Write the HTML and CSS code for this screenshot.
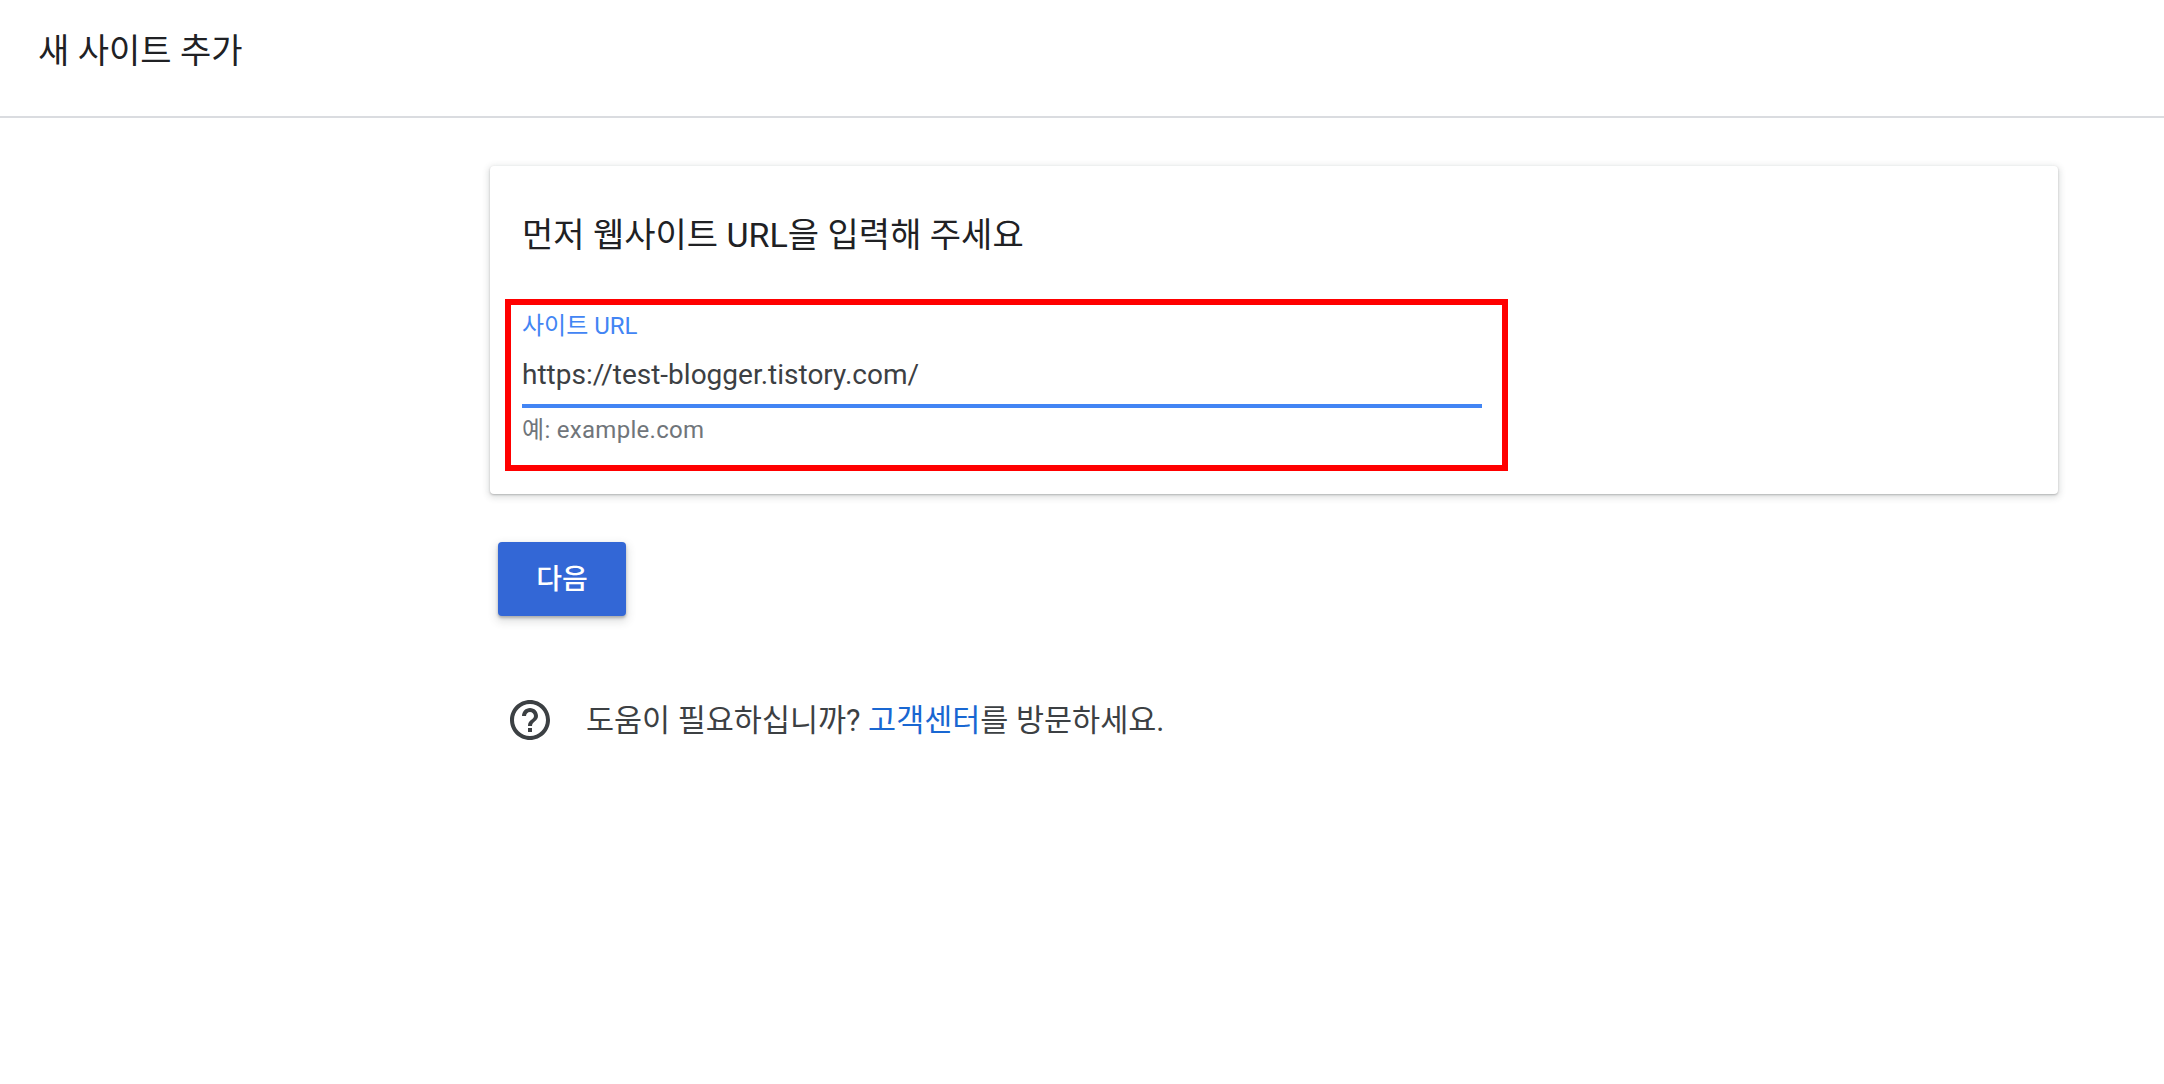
FILE: index.html
```html
<!DOCTYPE html>
<html lang="ko">
<head>
<meta charset="utf-8">
<title>새 사이트 추가</title>
<link rel="stylesheet" href="styles.css">
</head>
<body>
<header class="topbar"><h1 class="topbar-title">새 사이트 추가</h1></header>
<main class="content">
  <section class="card">
    <h2 class="card-title">먼저 웹사이트 URL을 입력해 주세요</h2>
    <div class="highlight">
      <label class="field-label">사이트 URL</label>
      <div class="field-value">https://test-blogger.tistory.com/</div>
      <div class="field-line"></div>
      <div class="field-hint">예: example.com</div>
    </div>
  </section>
  <button class="next-btn">다음</button>
  <div class="help">
    <svg class="help-icon" viewBox="0 0 24 24"><path d="M11 18h2v-2h-2v2zm1-16C6.48 2 2 6.48 2 12s4.48 10 10 10 10-4.48 10-10S17.52 2 12 2zm0 18c-4.41 0-8-3.59-8-8s3.59-8 8-8 8 3.59 8 8-3.59 8-8 8zm0-14c-2.21 0-4 1.79-4 4h2c0-1.1.9-2 2-2s2 .9 2 2c0 2-3 1.75-3 5h2c0-2.25 3-2.5 3-5 0-2.21-1.79-4-4-4z"/></svg>
    <p class="help-text">도움이 필요하십니까? <a class="help-link">고객센터</a>를 방문하세요.</p>
  </div>
</main>
</body>
</html>
```
FILE: styles.css
```css
* { box-sizing: border-box; }
html, body { margin: 0; padding: 0; background: #fff; }
body {
  font-family: Roboto, "Noto Sans CJK KR", sans-serif;
  color: #202124;
  height: 1084px;
  overflow: hidden;
}
.topbar {
  height: 118px;
  border-bottom: 2px solid #dadce0;
  padding: 29px 0 0 38px;
}
.topbar-title {
  margin: 0;
  font-size: 34px;
  line-height: 44px;
  font-weight: 400;
}
.content {
  padding: 48px 106px 0 490px;
}
.card {
  height: 328px;
  background: #fff;
  border-radius: 4px;
  box-shadow: 0 1px 2px rgba(60,64,67,.3), 0 2px 6px 2px rgba(60,64,67,.15);
  padding: 47px 0 0 15px;
}
.card-title {
  margin: 0 0 42px 17px;
  font-size: 34px;
  line-height: 44px;
  font-weight: 400;
}
.highlight {
  width: 1003px;
  height: 172px;
  border: 6px solid #f00;
  padding: 6px 0 0 11px;
}
.field-label {
  display: block;
  font-size: 24px;
  line-height: 30px;
  color: #4285f4;
}
.field-value {
  margin-top: 16px;
  font-size: 28px;
  line-height: 36px;
  color: #3c4043;
}
.field-line {
  width: 960px;
  height: 4px;
  margin-top: 11px;
  background: #4285f4;
}
.field-hint {
  margin-top: 6px;
  font-size: 24px;
  line-height: 32px;
  letter-spacing: .3px;
  color: #70757a;
}
.next-btn {
  display: block;
  width: 128px;
  height: 74px;
  margin: 48px 0 0 8px;
  padding: 0 0 4px;
  border: 0;
  border-radius: 4px;
  background: #3367d6;
  color: #fff;
  font: 500 28px Roboto, "Noto Sans CJK KR", sans-serif;
  box-shadow: 0 2px 3px rgba(60,64,67,.35), 0 4px 8px 2px rgba(60,64,67,.15);
}
.help {
  display: flex;
  align-items: center;
  margin: 80px 0 0 16px;
}
.help-icon {
  width: 48px;
  height: 48px;
  fill: #3c4043;
  flex: none;
}
.help-text {
  margin: 2px 0 0 32px;
  font-size: 30.5px;
  line-height: 44px;
  color: #3c4043;
}
.help-link {
  color: #1967d2;
}
```
